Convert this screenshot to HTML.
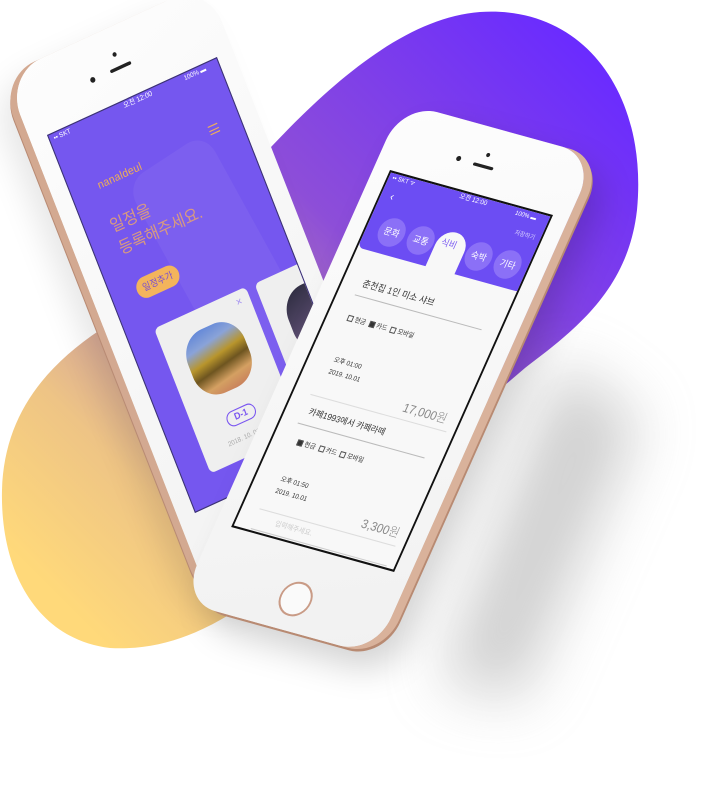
<!DOCTYPE html>
<html><head><meta charset="utf-8"><style>
*{margin:0;padding:0;box-sizing:border-box}
body{width:708px;height:794px;overflow:hidden;background:#fff;position:relative;font-family:"Liberation Sans","Noto Sans CJK KR",sans-serif}
.ph{position:absolute;left:0;top:0;width:180px;height:360px;transform-origin:0 0}
.ab{position:absolute}
.body{position:absolute;left:-17px;top:-64px;width:214px;height:506px;border-radius:38px;background:linear-gradient(160deg,#fdfdfd,#f1f1f1)}
.scr{position:absolute;left:0;top:0;width:180px;height:360px;overflow:hidden}
.t{position:absolute;white-space:nowrap;line-height:1}
.cb{display:inline-block;width:6px;height:6px;border:0.8px solid #555;margin-right:2px;vertical-align:-1px}
.cb.f{background:#333}
.circ{position:absolute;width:28px;height:28px;border-radius:50%;background:#8b70f7;color:#fff;font-size:9px;text-align:center;line-height:28px;top:40px}
</style></head><body>
<svg width="708" height="794" style="position:absolute;left:0;top:0">
<defs>
<linearGradient id="g" x1="600" y1="60" x2="60" y2="600" gradientUnits="userSpaceOnUse">
<stop offset="0" stop-color="#6a2bff"/><stop offset="0.4" stop-color="#8d4ed8"/><stop offset="0.62" stop-color="#c08fa6"/><stop offset="0.82" stop-color="#eec485"/><stop offset="1" stop-color="#ffd97a"/></linearGradient>
<filter id="bl" filterUnits="userSpaceOnUse" x="0" y="0" width="708" height="794"><feGaussianBlur stdDeviation="30"/></filter>
</defs>
<path d="M480,12 C585,5 648,95 637,210 C628,290 575,330 525,368 L300,560 C240,615 180,652 110,648 C40,640 0,575 2,490 C4,420 40,370 100,330 L250,170 C320,92 400,18 480,12 Z" fill="url(#g)"/>
<path d="M560,360 L640,420 L520,700 L440,680 Z" fill="#a0a0a0" opacity="0.5" filter="url(#bl)"/>
</svg>

<!-- LEFT PHONE -->
<div class="ph" style="transform:matrix(0.944,-0.433,0.411,1.05,47,135)">
 <div class="body" style="box-shadow:-7px 0 0 #d3a991, -8px 2px 0 #b98b74, -20px 10px 30px rgba(0,0,0,0.1)"></div>
 <div class="ab" style="left:87px;top:-42px;width:4px;height:4px;border-radius:50%;background:#222"></div>
 <div class="ab" style="left:79px;top:-29px;width:22px;height:3px;border-radius:2px;background:#222"></div>
 <div class="ab" style="left:58px;top:-30px;width:5px;height:5px;border-radius:50%;background:#222"></div>
 <div class="scr" style="background:#7557ef;border:1px solid #3c3470">
  <div class="ab" style="left:70px;top:60px;width:90px;height:260px;border-radius:20px;background:rgba(255,255,255,0.05);transform:rotate(-8deg)"></div>
  <div class="t" style="left:4px;top:2px;font-size:6px;color:#fff">▪▪ SKT</div>
  <div class="t" style="left:78px;top:2px;font-size:6.5px;color:#fff">오전 12:00</div>
  <div class="t" style="left:142px;top:2px;font-size:6px;color:#fff">100% ▬</div>
  <div class="ab" style="left:146px;top:52px;width:10px;height:8px;border-top:1.3px solid #f2b056;border-bottom:1.3px solid #f2b056"></div>
  <div class="ab" style="left:146px;top:55.5px;width:10px;height:1.3px;background:#f2b056"></div>
  <div class="t" style="left:27px;top:55px;font-size:10px;color:#f0b055;letter-spacing:0.3px">nanaldeul</div>
  <div class="t" style="left:24px;top:90px;font-size:15px;color:#d89a80">일정을</div>
  <div class="t" style="left:24px;top:111px;font-size:15px;color:#d89a80">등록해주세요.</div>
  <div class="ab" style="left:25px;top:149px;width:44px;height:19px;border-radius:10px;background:#f3b45c;color:#7a4fd0;font-size:8.5px;text-align:center;line-height:19px">일정추가</div>
  <div class="ab" style="left:27px;top:195px;width:97px;height:138px;border-radius:5px;background:#efefef">
   <div class="t" style="left:83px;top:6px;font-size:10px;color:#a592f0">×</div>
   <div class="ab" style="left:18px;top:18px;width:60px;height:60px;border-radius:24px;background:linear-gradient(170deg,#5b82d9 0%,#8aa3d8 25%,#b8952c 45%,#6e5520 60%,#d4a062 78%,#c6785a 100%)"></div>
   <div class="ab" style="left:33px;top:95px;width:30px;height:14px;border-radius:8px;border:1.5px solid #7a56f0;color:#7a56f0;font-size:8.5px;font-weight:bold;text-align:center;line-height:11px">D-1</div>
   <div class="t" style="left:26px;top:119px;font-size:6px;color:#aaa">2018. 10. 01 - 03</div>
  </div>
  <div class="ab" style="left:133px;top:196px;width:97px;height:138px;border-radius:5px;background:#efefef">
   <div class="ab" style="left:18px;top:18px;width:60px;height:60px;border-radius:24px;background:linear-gradient(160deg,#2a2a3c,#574a6c 50%,#c04fa0 70%,#2c2236)"></div>
  </div>
 </div>
</div>

<!-- RIGHT PHONE -->
<div class="ph" style="transform:matrix(0.9056,0.25,-0.4389,0.9861,390,170)">
 <div class="body" style="box-shadow:9px 0 0 #d9b29b, 11px 2px 0 #b88a72, 25px 15px 35px rgba(0,0,0,0.18)"></div>
 <div class="ab" style="left:88px;top:-40px;width:4px;height:4px;border-radius:50%;background:#222"></div>
 <div class="ab" style="left:79px;top:-28px;width:22px;height:3px;border-radius:2px;background:#222"></div>
 <div class="ab" style="left:60px;top:-30px;width:5px;height:5px;border-radius:50%;background:#222"></div>
 <div class="ab" style="left:78px;top:394px;width:34px;height:34px;border-radius:50%;border:2px solid #c99b86;background:#fafafa"></div>
 <div class="scr" style="background:#f8f8f8;border:2px solid #111;height:362px">
  <div class="ab" style="left:0;top:0;width:180px;height:76px;background:#6c4df3;border-radius:0 0 6px 6px"></div>
  <div class="ab" style="left:75px;top:38px;width:32px;height:42px;border-radius:16px 16px 0 0;background:#f8f8f8"></div>
  <div class="t" style="left:4px;top:2px;font-size:6px;color:#fff">▪▪ SKT ᯤ</div>
  <div class="t" style="left:78px;top:2px;font-size:6.5px;color:#fff">오전 12:00</div>
  <div class="t" style="left:140px;top:3px;font-size:6px;color:#fff">100% ▬</div>
  <div class="t" style="left:10px;top:17px;font-size:11px;color:#fff">‹</div>
  <div class="t" style="left:148px;top:21px;font-size:6px;color:#d8d0ff">저장하기</div>
  <div class="circ" style="left:13px">문화</div>
  <div class="circ" style="left:45px">교통</div>
  <div class="t" style="left:80px;top:46px;font-size:9px;color:#7b5cf2">식비</div>
  <div class="circ" style="left:109px">숙박</div>
  <div class="circ" style="left:141px">기타</div>
  <div class="t" style="left:21px;top:103px;font-size:9px;color:#333">춘천집 1인 미소 샤브</div>
  <div class="ab" style="left:18px;top:119px;width:140px;height:1px;background:#bbb"></div>
  <div class="t" style="left:21px;top:139px;font-size:6.5px;color:#333"><span class="cb"></span>현금 &nbsp;<span class="cb f"></span>카드 &nbsp;<span class="cb"></span>모바일</div>
  <div class="t" style="left:26px;top:181px;font-size:6.5px;color:#333">오후 01:00</div>
  <div class="t" style="left:26px;top:193px;font-size:6.5px;color:#333">2019. 10.01</div>
  <div class="t" style="left:115px;top:203px;font-size:12px;color:#888;font-weight:300">17,000원</div>
  <div class="ab" style="left:18px;top:220px;width:150px;height:1px;background:#ddd"></div>
  <div class="t" style="left:24px;top:232px;font-size:8.5px;color:#333">카페1993에서 카페라떼</div>
  <div class="ab" style="left:18px;top:249px;width:140px;height:1px;background:#bbb"></div>
  <div class="t" style="left:26px;top:264px;font-size:6.5px;color:#333"><span class="cb f"></span>현금 &nbsp;<span class="cb"></span>카드 &nbsp;<span class="cb"></span>모바일</div>
  <div class="t" style="left:26px;top:302px;font-size:6.5px;color:#333">오후 01:50</div>
  <div class="t" style="left:26px;top:314px;font-size:6.5px;color:#333">2019. 10.01</div>
  <div class="t" style="left:125px;top:318px;font-size:12px;color:#888;font-weight:300">3,300원</div>
  <div class="ab" style="left:18px;top:336px;width:150px;height:1px;background:#ddd"></div>
  <div class="t" style="left:40px;top:343px;font-size:7px;color:#ccc">입력해주세요.</div>
  <div class="ab" style="left:18px;top:356px;width:150px;height:1px;background:#ccc"></div>
 </div>
</div>
</body></html>
